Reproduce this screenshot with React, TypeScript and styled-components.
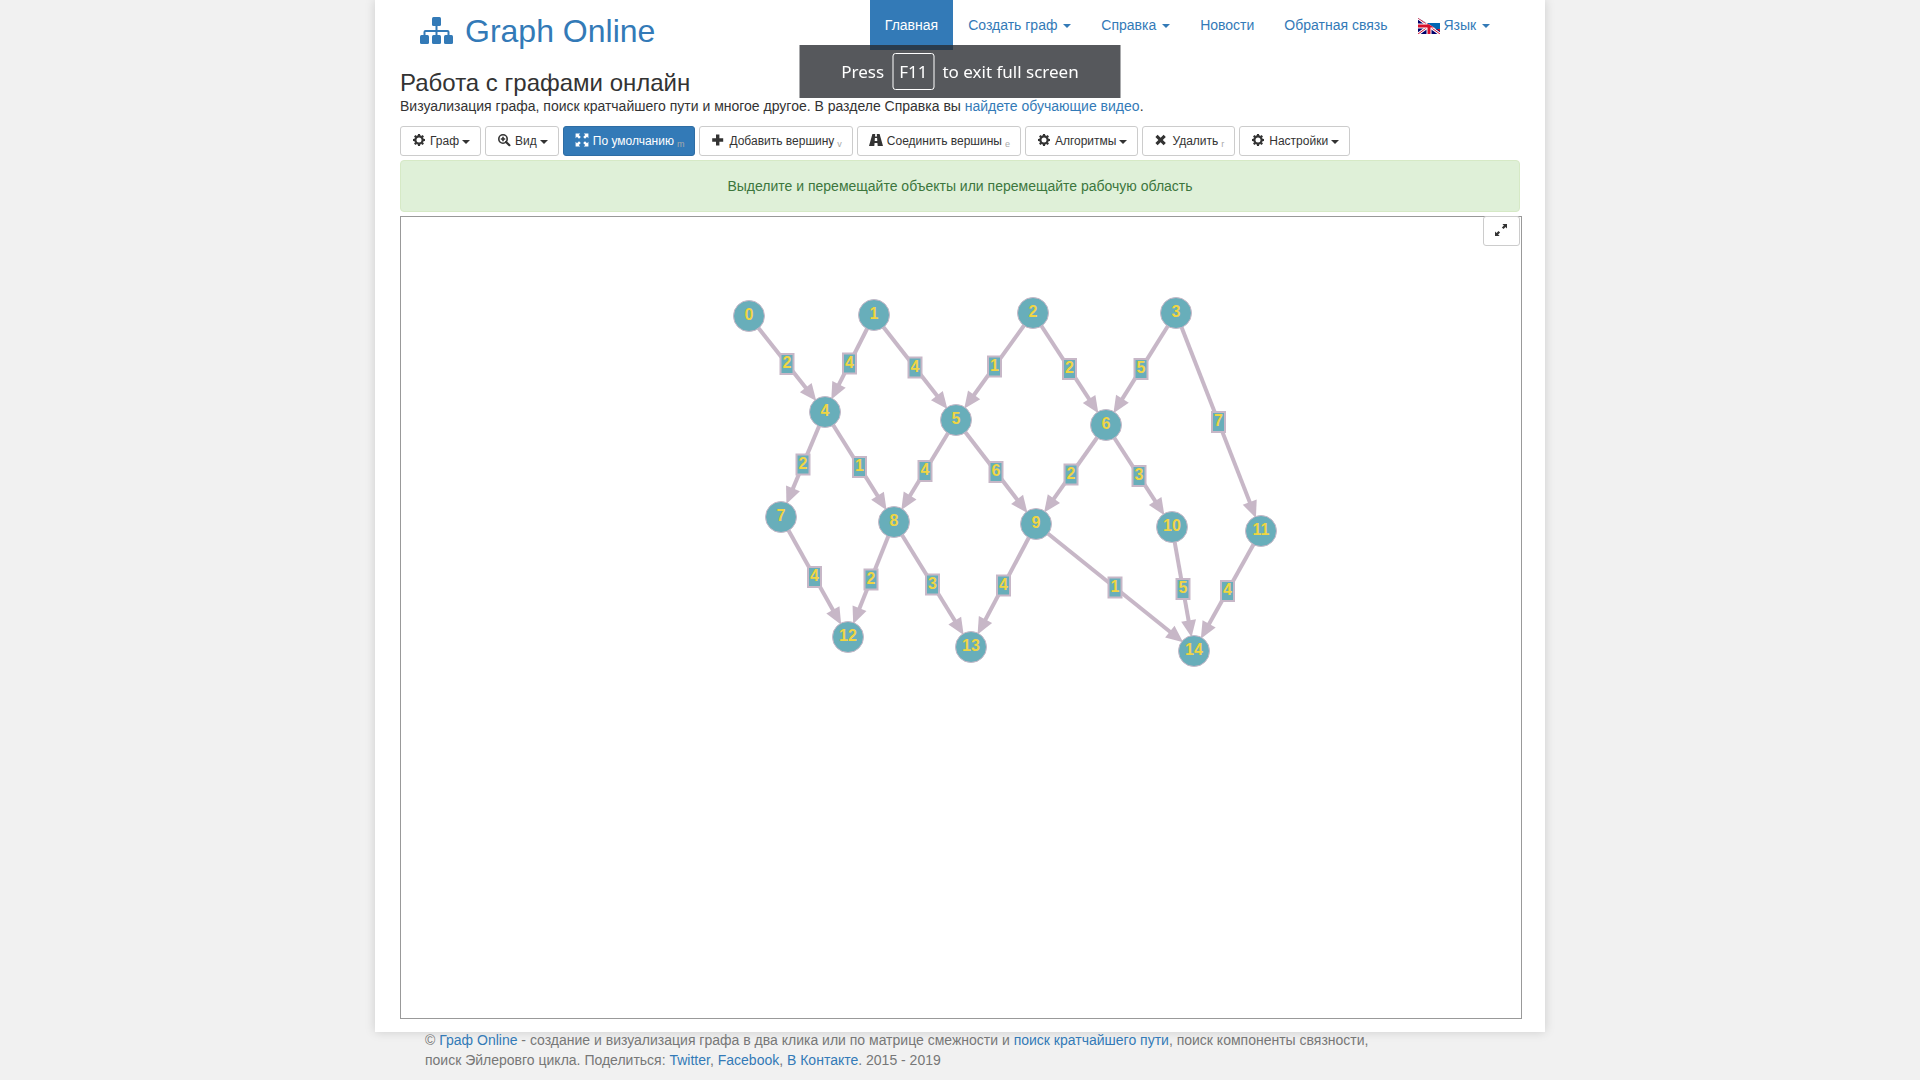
import React from "react";
import styled, { createGlobalStyle, css } from "styled-components";

const BLUE = "#337ab7";
const NODE_FILL = "#68aeba";
const LINE = "#c7b7c7";
const GRAPH_TEXT = "#f0d543";

const GlobalStyle = createGlobalStyle`
  *, *::before, *::after { box-sizing: border-box; }
  body {
    margin: 0;
    background: #f1f1f1;
    color: #333;
    font: 14px/20px "Liberation Sans", Arial, sans-serif;
  }
  a { color: ${BLUE}; text-decoration: none; }
`;

const Page = styled.div`
  display: flex;
  flex-direction: column;
  min-height: 100vh;
  max-width: 1170px;
  margin: 0 auto;
`;

const Sheet = styled.div`
  display: flex;
  flex: 1;
  flex-direction: column;
  padding: 0 25px 13px;
  background: #fff;
  box-shadow: 0 0 10px rgba(0, 0, 0, 0.15);
`;

const Header = styled.header`
  display: flex;
  justify-content: space-between;
  align-items: flex-start;
  padding: 0 15px 0 20px;
  height: 70px;
`;

const Brand = styled.a`
  display: flex;
  align-items: center;
  gap: 12px;
  padding-top: 12px;
  font-size: 32px;
  line-height: 38px;

  svg { margin-bottom: 2px; }
`;

const Nav = styled.nav`
  display: flex;
`;

const NavLink = styled.a<{ $active?: boolean }>`
  padding: 15px;
  white-space: nowrap;
  ${(p) => p.$active && css`
    background: ${BLUE};
    color: #fff;
  `}

  svg { vertical-align: middle; }
`;

const Caret = styled.span`
  display: inline-block;
  margin-left: 2px;
  vertical-align: middle;
  border-top: 4px solid;
  border-left: 4px solid transparent;
  border-right: 4px solid transparent;
`;

const Title = styled.h1`
  margin: 0;
  font-size: 24px;
  font-weight: 400;
  line-height: 26px;
`;

const Lead = styled.p`
  margin: 0 0 10px;
`;

const Toolbar = styled.div`
  display: flex;
  flex-wrap: wrap;
  gap: 4px;
  margin-bottom: 4px;
`;

const ToolButton = styled.button<{ $primary?: boolean }>`
  display: flex;
  align-items: center;
  height: 30px;
  padding: 0 10px;
  border: 1px solid ${(p) => (p.$primary ? "#2e6da4" : "#ccc")};
  border-radius: 3px;
  background: ${(p) => (p.$primary ? BLUE : "#fff")};
  color: ${(p) => (p.$primary ? "#fff" : "#333")};
  font: 12px/18px "Liberation Sans", Arial, sans-serif;
  white-space: nowrap;

  svg { margin: 0 4px 2px 1px; }
  ${Caret} { margin: 2px 0 0 3px; }
`;

const Hotkey = styled.sub`
  align-self: flex-end;
  margin: 0 0 4px 3px;
  color: #aaa;
  font-size: 9px;
  line-height: 14px;
`;

const Message = styled.div`
  margin-bottom: 4px;
  padding: 15px;
  border: 1px solid #d6e9c6;
  border-radius: 4px;
  background: #dff0d8;
  color: #3c763d;
  text-align: center;
`;

const Workspace = styled.section`
  position: relative;
  display: flex;
  flex: 1;
  min-height: 500px;
  margin-right: -2px;
  border: 1px solid #999;
`;

const FullscreenButton = styled(ToolButton)`
  position: absolute;
  top: -1px;
  right: 1px;

  svg { margin: 0 1px 2px 0; }
`;

const Drawing = styled.svg`
  display: block;
  width: 100%;
  font: bold 16px "Liberation Sans", Arial, sans-serif;
  text-anchor: middle;
`;

const Footer = styled.footer`
  position: relative;
  max-width: 1070px;
  margin-top: -2px;
  padding: 0 50px 10px;
  color: #777;
`;

const Toast = styled.div`
  position: fixed;
  top: 45px;
  left: 50%;
  display: flex;
  align-items: center;
  justify-content: center;
  gap: 8px;
  width: 321px;
  height: 53px;
  transform: translateX(-50%);
  background: rgba(40, 43, 48, 0.79);
  color: #fff;
  font: 17px/24px "Noto Sans", "Open Sans", sans-serif;
  white-space: nowrap;
`;

const Key = styled.kbd`
  padding: 5px 6px;
  border: 1px solid #fff;
  border-radius: 3px;
  font: inherit;
  line-height: 25px;
`;

const Glyph = ({ children }: { children: React.ReactNode }) => (
  <svg width="14" height="14" viewBox="0 0 14 14" fill="currentColor" aria-hidden="true">
    {children}
  </svg>
);

const Cog = () => (
  <Glyph>
    <circle cx="7" cy="7" r="3.6" fill="none" stroke="currentColor" strokeWidth="2.2" />
    {[0, 45, 90, 135, 180, 225, 270, 315].map((a) => (
      <path key={a} d="M5.7 3 6 1h2l.3 2z" transform={`rotate(${a} 7 7)`} />
    ))}
  </Glyph>
);

const ZoomIn = () => (
  <Glyph>
    <circle cx="6" cy="6" r="4.2" fill="none" stroke="currentColor" strokeWidth="1.6" />
    <path d="M5.2 3.8h1.6v1.4h1.4v1.6H6.8v1.4H5.2V6.8H3.8V5.2h1.4z" />
    <path d="m9 9 3.4 3.2" stroke="currentColor" strokeWidth="2.2" strokeLinecap="round" />
  </Glyph>
);

const Expand = () => (
  <Glyph>
    {[0, 90, 180, 270].map((a) => (
      <path key={a} d="M.6.6h4.6L3.8 2l2 2L4 5.8l-2-2L.6 5.2z" transform={`rotate(${a} 7 7)`} />
    ))}
  </Glyph>
);

const Plus = () => (
  <Glyph>
    <path d="M5 1.5h3.4v3.8h3.8v3.4H8.4v3.8H5V8.7H1.2V5.3H5z" />
  </Glyph>
);

const Road = () => (
  <Glyph>
    <path d="M3.4 1h2.8L6 3.6h2L7.8 1h2.8L14 13H8.7l-.3-3H5.6l-.3 3H0zM5.9 5l-.2 3h2.6l-.2-3z" fillRule="evenodd" />
  </Glyph>
);

const Remove = () => (
  <Glyph>
    <path d="m1.4 4 2.2-2.2L6.6 4.8l3-3L11.8 4l-3 3 3 3-2.2 2.2-3-3-3 3L1.4 10l3-3z" />
  </Glyph>
);

const ResizeFull = () => (
  <Glyph>
    <path d="M8.4 1H13v4.6l-1.5-1.5-2 2-1.6-1.6 2-2zM5.6 13H1V8.4l1.5 1.5 2-2 1.6 1.6-2 2z" />
  </Glyph>
);

const Sitemap = () => (
  <svg width="33" height="27" viewBox="0 0 33 27" fill="currentColor" aria-hidden="true">
    <rect x="12" width="9" height="9" rx="1.5" />
    <rect y="18" width="9" height="9" rx="1.5" />
    <rect x="12" y="18" width="9" height="9" rx="1.5" />
    <rect x="24" y="18" width="9" height="9" rx="1.5" />
    <path d="M16.5 8v11M4.5 19v-4q0-1 1-1h22q1 0 1 1v4" fill="none" stroke="currentColor" strokeWidth="2" />
  </svg>
);

const Flag = () => (
  <svg width="22" height="16" viewBox="0 0 22 16" aria-hidden="true">
    <path d="M0 0h22v16H0z" fill="#fff" />
    <path d="M0 5h22v6H0z" fill="#0066b3" />
    <path d="M0 11h22v5H0z" fill="#e8112d" />
    <clipPath id="british-half"><path d="M0 0 22 13v3H0z" /></clipPath>
    <g clipPath="url(#british-half)">
      <path d="M0 0h22v16H0z" fill="#00006b" />
      <path d="m0 0 22 16M22 0 0 16" stroke="#fff" strokeWidth="3" />
      <path d="m0 0 22 16M22 0 0 16" stroke="#d01030" strokeWidth="1" />
      <path d="M11 0v16M0 8h22" stroke="#fff" strokeWidth="5" />
      <path d="M11 0v16M0 8h22" stroke="#d8102c" strokeWidth="3" />
    </g>
  </svg>
);

type Point = [number, number];

const nodes: Point[] = [
  [348, 99], [473, 98], [632, 96], [775, 96],
  [424, 195], [555, 203], [705, 208],
  [380, 300], [493, 305], [635, 307], [771, 310], [860, 314],
  [447, 420], [570, 430], [793, 434],
];

// from, to, weight
const edges: [number, number, number][] = [
  [0, 4, 2], [1, 4, 4], [1, 5, 4], [2, 5, 1], [2, 6, 2], [3, 6, 5], [3, 11, 7],
  [4, 7, 2], [4, 8, 1], [5, 8, 4], [5, 9, 6], [6, 9, 2], [6, 10, 3],
  [7, 12, 4], [8, 12, 2], [8, 13, 3], [9, 13, 4], [9, 14, 1], [10, 14, 5], [11, 14, 4],
];

const Edge = ({ from, to, weight }: { from: Point; to: Point; weight: number }) => {
  const [x1, y1] = from;
  const [x2, y2] = to;
  const length = Math.hypot(x2 - x1, y2 - y1);
  const angle = (Math.atan2(y2 - y1, x2 - x1) * 180) / Math.PI;
  const mx = (x1 + x2) / 2;
  const my = (y1 + y2) / 2;
  return (
    <g>
      <g transform={`translate(${x1} ${y1}) rotate(${angle})`}>
        <path d={`M0 0H${length - 24}`} stroke={LINE} strokeWidth="4" />
        <path d={`M${length - 14} 0l-17-7.5v15z`} fill={LINE} />
      </g>
      <rect x={mx - 6.5} y={my - 10} width="13" height="20" fill={NODE_FILL} stroke={LINE} strokeWidth="2" />
      <text x={mx} y={my + 4} fill={GRAPH_TEXT}>{weight}</text>
    </g>
  );
};

const Node = ({ at, label }: { at: Point; label: number }) => (
  <g>
    <circle cx={at[0]} cy={at[1]} r="15.5" fill={NODE_FILL} stroke={LINE} />
    <text x={at[0]} y={at[1] + 4} fill={GRAPH_TEXT}>{label}</text>
  </g>
);

export default function App() {
  return (
    <>
      <GlobalStyle />
      <Page>
        <Sheet>
          <Header>
            <Brand href="#"><Sitemap />Graph Online</Brand>
            <Nav>
              <NavLink href="#" $active>Главная</NavLink>
              <NavLink href="#">Создать граф <Caret /></NavLink>
              <NavLink href="#">Справка <Caret /></NavLink>
              <NavLink href="#">Новости</NavLink>
              <NavLink href="#">Обратная связь</NavLink>
              <NavLink href="#"><Flag /> Язык <Caret /></NavLink>
            </Nav>
          </Header>
          <Title>Работа с графами онлайн</Title>
          <Lead>
            Визуализация графа, поиск кратчайшего пути и многое другое. В разделе Справка вы{" "}
            <a href="#">найдете обучающие видео</a>.
          </Lead>
          <Toolbar>
            <ToolButton type="button"><Cog />Граф<Caret /></ToolButton>
            <ToolButton type="button"><ZoomIn />Вид<Caret /></ToolButton>
            <ToolButton type="button" $primary><Expand />По умолчанию<Hotkey>m</Hotkey></ToolButton>
            <ToolButton type="button"><Plus />Добавить вершину<Hotkey>v</Hotkey></ToolButton>
            <ToolButton type="button"><Road />Соединить вершины<Hotkey>e</Hotkey></ToolButton>
            <ToolButton type="button"><Cog />Алгоритмы<Caret /></ToolButton>
            <ToolButton type="button"><Remove />Удалить<Hotkey>r</Hotkey></ToolButton>
            <ToolButton type="button"><Cog />Настройки<Caret /></ToolButton>
          </Toolbar>
          <Message role="status">Выделите и перемещайте объекты или перемещайте рабочую область</Message>
          <Workspace>
            <Drawing>
              {edges.map(([a, b, weight]) => (
                <Edge key={`${a}-${b}`} from={nodes[a]} to={nodes[b]} weight={weight} />
              ))}
              {nodes.map((at, i) => <Node key={i} at={at} label={i} />)}
            </Drawing>
            <FullscreenButton type="button" aria-label="Во весь экран"><ResizeFull /></FullscreenButton>
          </Workspace>
        </Sheet>
        <Footer>
          © <a href="#">Граф Online</a> - создание и визуализация графа в два клика или по матрице смежности и{" "}
          <a href="#">поиск кратчайшего пути</a>, поиск компоненты связности, поиск Эйлеровго цикла. Поделиться:{" "}
          <a href="#">Twitter</a>, <a href="#">Facebook</a>, <a href="#">В Контакте</a>. 2015 - 2019
        </Footer>
      </Page>
      <Toast>Press <Key>F11</Key> to exit full screen</Toast>
    </>
  );
}
